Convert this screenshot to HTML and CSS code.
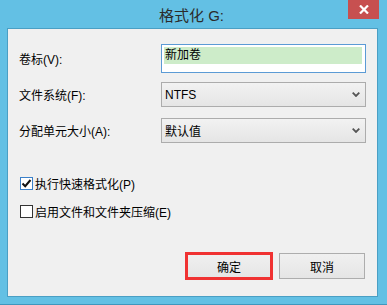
FILE: index.html
```html
<!DOCTYPE html>
<html lang="zh-CN">
<head>
  <meta charset="UTF-8">
  <title>格式化 G:</title>
  <link rel="stylesheet" href="styles.css">
</head>
<body>
  <div class="window">
    <div class="titlebar">
      <span class="title">格式化 G:</span>
      <div class="close">
        <svg width="10" height="9" viewBox="0 0 10 9"><path d="M1 0.5 L9 8.5 M9 0.5 L1 8.5" stroke="#fff" stroke-width="2.2"/></svg>
      </div>
    </div>

    <div class="client">
      <div class="row row_name">
        <span class="label">卷标(V):</span>
        <div class="textbox"><span class="sel">新加卷</span></div>
      </div>
      <div class="row row_fs">
        <span class="label">文件系统(F):</span>
        <div class="combo">
          <span>NTFS</span>
          <svg width="8" height="5" viewBox="0 0 8 5"><path d="M0.7 0.7 L4 4 L7.3 0.7" fill="none" stroke="#555" stroke-width="1.8"/></svg>
        </div>
      </div>
      <div class="row row_size">
        <span class="label">分配单元大小(A):</span>
        <div class="combo">
          <span>默认值</span>
          <svg width="8" height="5" viewBox="0 0 8 5"><path d="M0.7 0.7 L4 4 L7.3 0.7" fill="none" stroke="#555" stroke-width="1.8"/></svg>
        </div>
      </div>

      <div class="check check_quick">
        <span class="box checked">
          <svg width="11" height="11" viewBox="0 0 11 11"><path d="M1.5 5.5 L4.2 8.2 L9.5 2" fill="none" stroke="#111" stroke-width="2"/></svg>
        </span>
        <span>执行快速格式化(P)</span>
      </div>
      <div class="check check_zip">
        <span class="box"></span>
        <span>启用文件和文件夹压缩(E)</span>
      </div>

      <div class="buttons">
        <div class="btn btn_ok">确定</div>
        <div class="btn">取消</div>
      </div>
    </div>
  </div>
</body>
</html>
```

FILE: styles.css
```css
html, body {
  margin: 0;
  padding: 0;
}
body {
  width: 387px;
  height: 305px;
  background-color: #63c0e4;
  font-family: "Liberation Sans", "Noto Sans CJK SC", sans-serif;
  font-size: 12px;
  color: #000;
  overflow: hidden;
}
.window {
  height: 305px;
  box-sizing: border-box;
  border-bottom: 1px solid #3f97bd;
  display: flex;
  flex-direction: column;
}
.titlebar {
  position: relative;
  height: 28px;
  display: flex;
  justify-content: center;
  align-items: center;
}
.title {
  font-size: 15px;
  color: #2b2b2b;
  margin-right: 4px;
  margin-top: 1px;
}
.close {
  position: absolute;
  top: 0;
  right: 8px;
  width: 31px;
  height: 19px;
  background-color: #c75050;
  display: flex;
  justify-content: center;
  align-items: center;
}
.client {
  flex: 1;
  margin: 0 9px 7px 7px;
  border: 1px solid #4a9fc4;
  background-color: #f0f0f0;
  padding: 15px 11px 0 11px;
  display: flex;
  flex-direction: column;
}
.row {
  display: flex;
  align-items: center;
}
.label {
  width: 142px;
}
.row_fs {
  margin-top: 9px;
}
.row_size {
  margin-top: 11px;
}
.textbox {
  width: 205px;
  height: 29px;
  box-sizing: border-box;
  border: 1px solid #5b9bd5;
  background-color: #fff;
  padding: 2px;
}
.sel {
  display: block;
  height: 17px;
  line-height: 17px;
  background-color: #cdecc9;
  padding-left: 1px;
  margin-right: 1px;
}
.combo {
  width: 205px;
  height: 25px;
  box-sizing: border-box;
  border: 1px solid #acacac;
  background: linear-gradient(#f2f2f2, #e5e5e5);
  display: flex;
  align-items: center;
  justify-content: space-between;
  padding: 0 5px 0 3px;
}
.check {
  display: flex;
  align-items: center;
  height: 13px;
  margin-left: 1px;
}
.check_quick {
  margin-top: 34px;
}
.check_zip {
  margin-top: 15px;
}
.box {
  width: 13px;
  height: 13px;
  box-sizing: border-box;
  border: 1px solid #333;
  background-color: #fff;
  margin-right: 2px;
  display: flex;
  justify-content: center;
  align-items: center;
}
.box.checked {
  border-color: #3b80c9;
}
.buttons {
  display: flex;
  justify-content: flex-end;
  gap: 7px;
  margin-top: 35px;
  padding-right: 1px;
}
.btn {
  width: 86px;
  height: 26px;
  box-sizing: border-box;
  border: 1px solid #adadad;
  background: linear-gradient(#f0f0f0, #e5e5e5);
  display: flex;
  justify-content: center;
  align-items: center;
}
.btn_ok {
  outline: 3px solid #f03232;
  outline-offset: -2px;
}
```
